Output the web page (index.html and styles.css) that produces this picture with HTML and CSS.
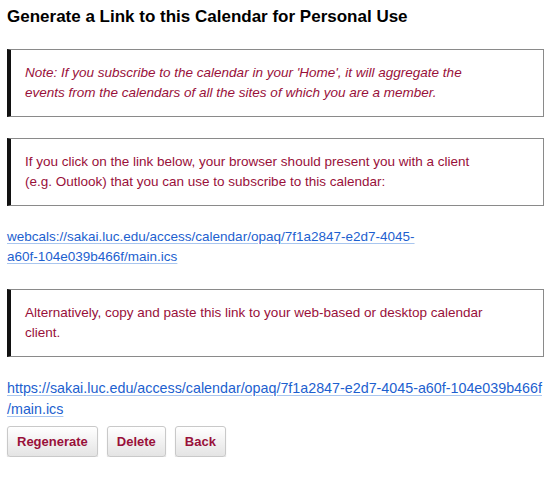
FILE: index.html
```html
<!DOCTYPE html>
<html>
<head>
<meta charset="utf-8">
<link rel="stylesheet" href="styles.css">
</head>
<body>
<div class="page">
  <h1 class="title">Generate a Link to this Calendar for Personal Use</h1>
  <div class="notice notice-italic">Note: If you subscribe to the calendar in your 'Home', it will aggregate the events from the calendars of all the sites of which you are a member.</div>
  <div class="notice">If you click on the link below, your browser should present you with a client (e.g. Outlook) that you can use to subscribe to this calendar:</div>
  <p class="link-row"><a class="link" href="#">webcals://sakai.luc.edu/access/calendar/opaq/7f1a2847-e2d7-4045-<wbr><span class="nowrap">a60f-104e039b466f/main.ics</span></a></p>
  <div class="notice">Alternatively, copy and paste this link to your web-based or desktop calendar client.</div>
  <p class="link-row link-row-2"><a class="link" href="#">https://sakai.luc.edu/access/calendar/opaq/7f1a2847-e2d7-4045-a60f-104e039b466f<wbr>/main.ics</a></p>
  <div class="actions">
    <button class="btn">Regenerate</button>
    <button class="btn">Delete</button>
    <button class="btn">Back</button>
  </div>
</div>
</body>
</html>
```
FILE: styles.css
```css
html, body {
  margin: 0;
  padding: 0;
  background: #fff;
}
body {
  font-family: "Liberation Sans", Arial, Helvetica, sans-serif;
  color: #000;
}
.page {
  width: 537px;
  padding: 6px 0 0 7px;
}
.title {
  margin: 0 0 22px 0;
  font-size: 17px;
  line-height: 21px;
  font-weight: bold;
  color: #000;
}
.notice {
  border: 1px solid #8a8a8a;
  border-left: 4px solid #111;
  padding: 13px 50px 13px 14px;
  font-size: 13.5px;
  line-height: 20px;
  color: #99103a;
  margin-bottom: 21px;
}
.notice-italic {
  font-style: italic;
}
.link-row {
  margin: 0 0 22px 0;
  font-size: 13.5px;
  line-height: 20px;
}
.link-row-2 {
  font-size: 14.3px;
  line-height: 21px;
  margin: 21px 0 6px 0;
}
.nowrap {
  white-space: nowrap;
}
.link {
  color: #1d5fcf;
  text-decoration: underline;
  text-decoration-color: #a9c6ef;
  text-underline-offset: 2px;
}
.actions {
  display: flex;
  gap: 9px;
}
.btn {
  height: 31px;
  padding: 0 9px;
  font-family: "Liberation Sans", Arial, Helvetica, sans-serif;
  font-size: 13px;
  font-weight: bold;
  color: #99103a;
  background: linear-gradient(#ffffff, #e4e4e4);
  border: 1px solid #c9c9c9;
  border-radius: 3px;
  box-shadow: 0 1px 1px rgba(0, 0, 0, 0.18);
}
```
